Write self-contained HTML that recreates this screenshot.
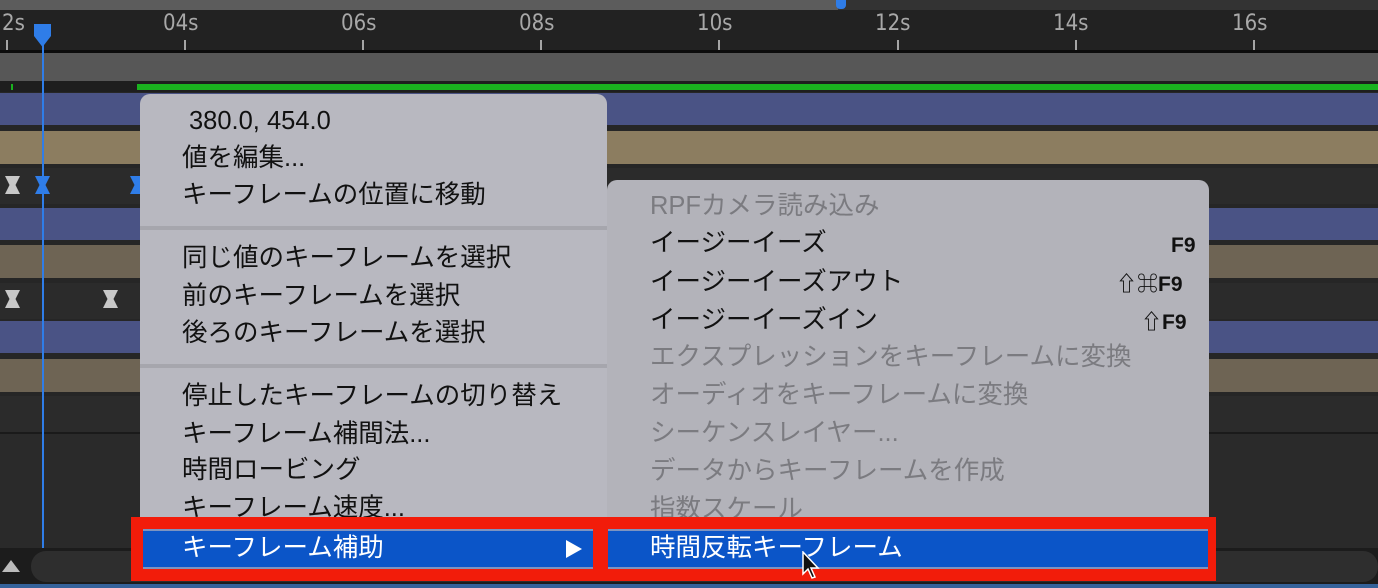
<!DOCTYPE html>
<html><head><meta charset="utf-8"><style>
*{margin:0;padding:0;box-sizing:border-box}
body{width:1378px;height:588px;overflow:hidden;background:#262626;position:relative;font-family:"Liberation Sans","Noto Sans CJK JP",sans-serif}
.a{position:absolute}
.t{position:absolute;font-size:25.5px;color:#111;white-space:nowrap;line-height:30px}
.g{color:#7b7b80}
.lbl{position:absolute;top:11px;font-size:22px;color:#a8a8a8;font-family:"DejaVu Sans Condensed","Liberation Sans",sans-serif}
.tick{position:absolute;top:40px;width:2px;height:10px;background:#a6a6a6}
</style></head><body>
<div class="a" style="left:0;top:0;width:838px;height:10px;background:#5c5c5c"></div>
<div class="a" style="left:838px;top:0;width:540px;height:10px;background:#333"></div>
<div class="a" style="left:836px;top:0;width:10px;height:9px;background:#2f7de8;border-radius:0 0 4px 4px"></div>
<div class="a" style="left:0;top:10px;width:1378px;height:41px;background:#222"></div>
<div class="lbl" style="left:2px">2s</div><div class="tick" style="left:6px"></div>
<div class="lbl" style="left:163px">04s</div><div class="tick" style="left:184px"></div>
<div class="lbl" style="left:341px">06s</div><div class="tick" style="left:362px"></div>
<div class="lbl" style="left:519px">08s</div><div class="tick" style="left:540px"></div>
<div class="lbl" style="left:697px">10s</div><div class="tick" style="left:718px"></div>
<div class="lbl" style="left:875px">12s</div><div class="tick" style="left:897px"></div>
<div class="lbl" style="left:1053px">14s</div><div class="tick" style="left:1075px"></div>
<div class="lbl" style="left:1232px">16s</div><div class="tick" style="left:1253px"></div>
<div class="a" style="left:0;top:50px;width:1378px;height:3px;background:#0c0c0c"></div>
<div class="a" style="left:0;top:53px;width:1378px;height:28px;background:#575757"></div>
<div class="a" style="left:0;top:81px;width:1378px;height:11px;background:#1e1e1e"></div>
<div class="a" style="left:137px;top:84px;width:1241px;height:6px;background:#1ab21f"></div>
<div class="a" style="left:11px;top:84px;width:2px;height:6px;background:#1ab21f"></div>
<!-- rows -->
<div class="a" style="left:0;top:93px;width:1378px;height:32px;background:#4a5385"></div>
<div class="a" style="left:0;top:131px;width:1378px;height:33px;background:#8c7d60"></div>
<div class="a" style="left:0;top:168px;width:1378px;height:36px;background:#2b2b2b"></div>
<div class="a" style="left:0;top:208px;width:1378px;height:32px;background:#4a5385"></div>
<div class="a" style="left:0;top:245px;width:1378px;height:33px;background:#6e6454"></div>
<div class="a" style="left:0;top:283px;width:1378px;height:36px;background:#2b2b2b"></div>
<div class="a" style="left:0;top:321px;width:1378px;height:32px;background:#4a5385"></div>
<div class="a" style="left:0;top:359px;width:1378px;height:33px;background:#6e6454"></div>
<div class="a" style="left:0;top:396px;width:1378px;height:36px;background:#2b2b2b"></div>
<div class="a" style="left:0;top:434px;width:1378px;height:114px;background:#2a2a2a"></div>
<div class="a" style="left:0;top:432px;width:1378px;height:2px;background:#1a1a1a"></div>
<!-- keyframes -->
<svg class="a" style="left:5px;top:176px" width="16" height="18"><path d="M0 0h15l-4.5 9 4.5 9H0l4.5-9z" fill="#c8c8c8"/></svg>
<svg class="a" style="left:5px;top:290px" width="16" height="18"><path d="M0 0h15l-4.5 9 4.5 9H0l4.5-9z" fill="#c8c8c8"/></svg>
<svg class="a" style="left:103px;top:290px" width="16" height="18"><path d="M0 0h15l-4.5 9 4.5 9H0l4.5-9z" fill="#c8c8c8"/></svg>
<svg class="a" style="left:35px;top:176px" width="16" height="18"><path d="M0 0h15l-4.5 9 4.5 9H0l4.5-9z" fill="#2f7de8"/></svg>
<svg class="a" style="left:130px;top:176px" width="16" height="18"><path d="M0 0h15l-4.5 9 4.5 9H0l4.5-9z" fill="#2f7de8"/></svg>
<!-- playhead -->
<div class="a" style="left:42px;top:30px;width:2px;height:518px;background:#2f7de8"></div>
<svg class="a" style="left:33px;top:22px" width="20" height="26"><path d="M1 2h17v12l-8.5 11L1 14z" fill="#2f7de8"/></svg>
<!-- bottom -->
<div class="a" style="left:0;top:548px;width:1378px;height:36px;background:#1c1c1c"></div>
<svg class="a" style="left:0;top:555px" width="22" height="18"><path d="M2 17L11 5l9 12z" fill="#bbb"/></svg>
<div class="a" style="left:31px;top:551px;width:1347px;height:31px;background:#2e2e2e;border-radius:15px"></div>
<div class="a" style="left:0;top:584px;width:1378px;height:4px;background:#35629a"></div>
<!-- menu 1 -->
<div class="a" style="left:140px;top:94px;width:467px;height:480px;background:#b8b8c0;border-radius:10px"></div>
<div class="a" style="left:140px;top:226px;width:467px;height:4px;background:#a6a6ad"></div>
<div class="a" style="left:140px;top:364px;width:467px;height:4px;background:#a6a6ad"></div>
<div class="t" style="left:189px;top:106px">380.0, 454.0</div>
<div class="t" style="left:182px;top:143px">値を編集...</div>
<div class="t" style="left:182px;top:180px">キーフレームの位置に移動</div>
<div class="t" style="left:182px;top:243px">同じ値のキーフレームを選択</div>
<div class="t" style="left:182px;top:281px">前のキーフレームを選択</div>
<div class="t" style="left:182px;top:318px">後ろのキーフレームを選択</div>
<div class="t" style="left:182px;top:381px">停止したキーフレームの切り替え</div>
<div class="t" style="left:182px;top:419px">キーフレーム補間法...</div>
<div class="t" style="left:182px;top:455px">時間ロービング</div>
<div class="t" style="left:182px;top:493px">キーフレーム速度...</div>
<!-- menu 2 -->
<div class="a" style="left:607px;top:180px;width:602px;height:394px;background:#b3b3ba;border-radius:10px"></div>
<div class="t g" style="left:650px;top:191px">RPFカメラ読み込み</div>
<div class="t" style="left:650px;top:228px">イージーイーズ</div>
<div class="t" style="left:650px;top:267px">イージーイーズアウト</div>
<div class="t" style="left:650px;top:305px">イージーイーズイン</div>
<div class="t" style="left:1171px;top:231px;font-size:21px;font-weight:bold">F9</div>
<div class="t" style="left:1116px;top:270px;font-size:21px;font-weight:bold">⇧⌘F9</div>
<div class="t" style="left:1141px;top:308px;font-size:21px;font-weight:bold">⇧F9</div>
<div class="t g" style="left:650px;top:342px">エクスプレッションをキーフレームに変換</div>
<div class="t g" style="left:650px;top:380px">オーディオをキーフレームに変換</div>
<div class="t g" style="left:650px;top:418px">シーケンスレイヤー...</div>
<div class="t g" style="left:650px;top:456px">データからキーフレームを作成</div>
<div class="t g" style="left:650px;top:494px">指数スケール</div>
<!-- highlights -->
<div class="a" style="left:131px;top:517px;width:470px;height:64px;background:#f21c0a"></div>
<div class="a" style="left:143px;top:529px;width:450px;height:40px;background:#0b55c8;border-top:2px solid #7d93c0;border-bottom:2px solid #7d93c0"></div>
<div class="t" style="left:182px;top:533px;color:#fff">キーフレーム補助</div>
<svg class="a" style="left:565px;top:539px" width="18" height="20"><path d="M1 1l16 9-16 9z" fill="#fff"/></svg>
<div class="a" style="left:600px;top:517px;width:616px;height:64px;background:#f21c0a"></div>
<div class="a" style="left:608px;top:529px;width:600px;height:40px;background:#0b55c8;border-top:2px solid #7d93c0;border-bottom:2px solid #7d93c0"></div>
<div class="t" style="left:650px;top:533px;color:#fff">時間反転キーフレーム</div>
<svg class="a" style="left:801px;top:551px" width="22" height="30"><path d="M2 1v22l5-5 4 9 3-1-4-9h7z" fill="#111" stroke="#fff" stroke-width="1.5"/></svg>
</body></html>
